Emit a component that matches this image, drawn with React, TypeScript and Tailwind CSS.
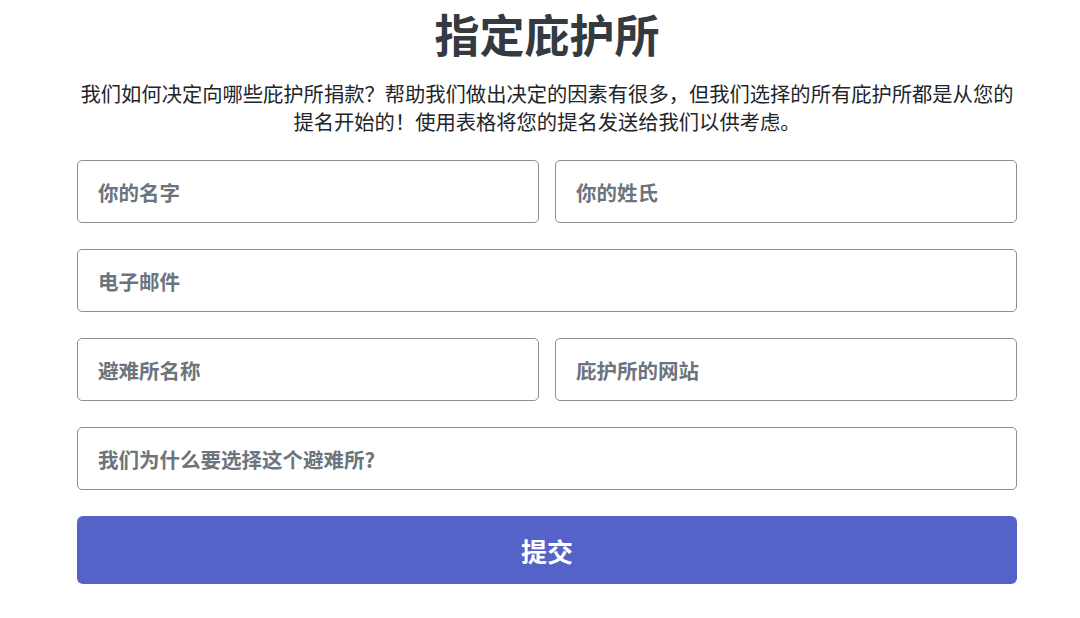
import React from "react";

const font = { fontFamily: '"Noto Sans CJK SC", "Noto Sans", sans-serif' };

function Field({ placeholder }: { placeholder: string }) {
  return (
    <input
      type="text"
      placeholder={placeholder}
      className="h-[63px] w-full rounded-[5px] border border-[#8a9098] bg-white px-5 text-[20.5px] font-bold text-[#495057] placeholder:text-[#6c757d] focus:outline-none"
      style={font}
    />
  );
}

export default function App() {
  return (
    <div className="min-h-[618px] w-full bg-white" style={font}>
      <div className="flex w-[940px] flex-col pt-[4px]" style={{ marginLeft: 77 }}>
        <h1 className="text-center text-[45px] font-bold leading-[60px] text-[#343a40]">指定庇护所</h1>
        <p className="mt-[15px] text-center text-[20.3px] leading-[28px] text-[#212529]">
          我们如何决定向哪些庇护所捐款？帮助我们做出决定的因素有很多，但我们选择的所有庇护所都是从您的
          <br />
          提名开始的！使用表格将您的提名发送给我们以供考虑。
        </p>
        <form className="mt-[25px] flex flex-col gap-[26px]" onSubmit={(e) => e.preventDefault()}>
          <div className="grid grid-cols-2 gap-4">
            <Field placeholder="你的名字" />
            <Field placeholder="你的姓氏" />
          </div>
          <Field placeholder="电子邮件" />
          <div className="grid grid-cols-2 gap-4">
            <Field placeholder="避难所名称" />
            <Field placeholder="庇护所的网站" />
          </div>
          <Field placeholder="我们为什么要选择这个避难所?" />
          <button
            type="submit"
            className="h-[68px] w-full rounded-[6px] bg-[#5563c9] text-[26px] font-bold text-white"
            style={font}
          >
            提交
          </button>
        </form>
      </div>
    </div>
  );
}
